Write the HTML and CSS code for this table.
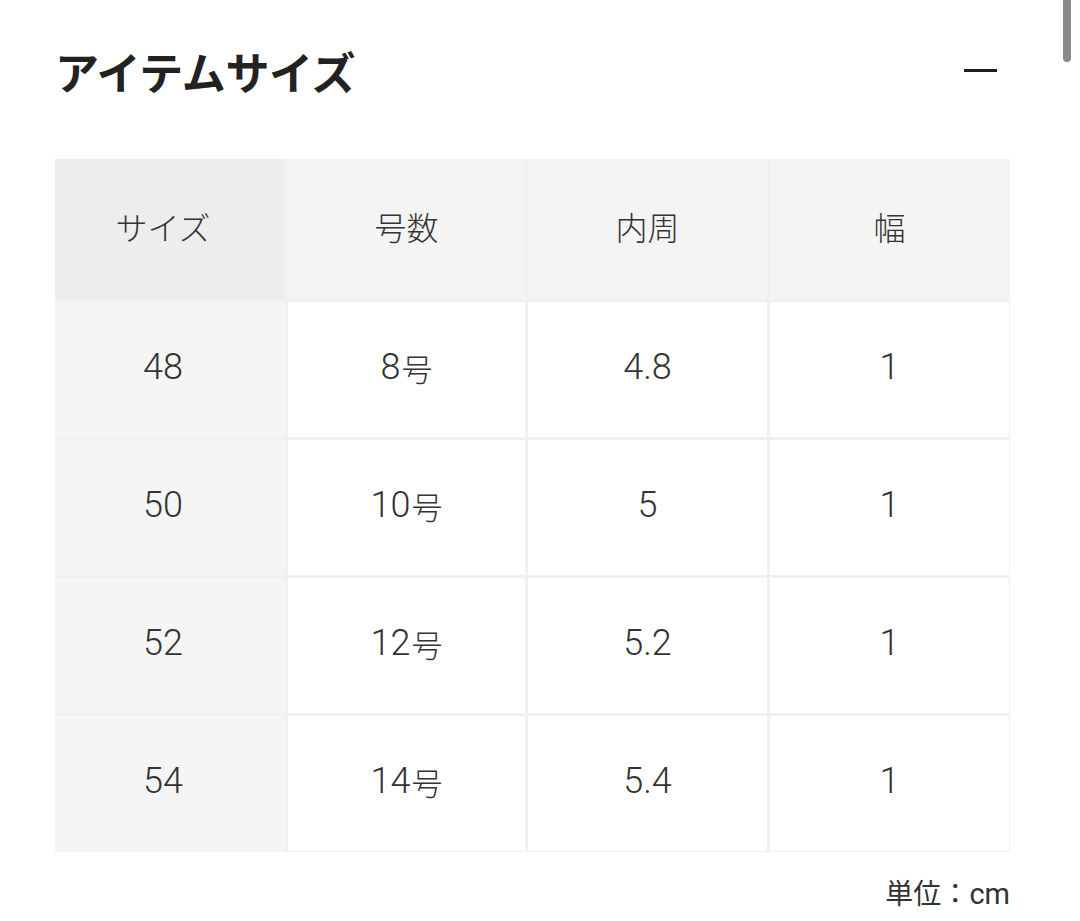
FILE: index.html
```html
<!DOCTYPE html>
<html lang="ja">
<head>
<meta charset="utf-8">
<link rel="stylesheet" href="styles.css">
</head>
<body>
<div class="scrollbar"></div>
<section class="panel">
  <div class="panel-head">
    <h2 class="title">アイテムサイズ</h2>
    <span class="minus"></span>
  </div>
  <div class="size-table">
    <div class="cell th first">サイズ</div>
    <div class="cell th">号数</div>
    <div class="cell th">内周</div>
    <div class="cell th">幅</div>

    <div class="cell first num">48</div>
    <div class="cell num">8<span class="jp">号</span></div>
    <div class="cell num">4.8</div>
    <div class="cell num">1</div>

    <div class="cell first num">50</div>
    <div class="cell num">10<span class="jp">号</span></div>
    <div class="cell num">5</div>
    <div class="cell num">1</div>

    <div class="cell first num">52</div>
    <div class="cell num">12<span class="jp">号</span></div>
    <div class="cell num">5.2</div>
    <div class="cell num">1</div>

    <div class="cell first num">54</div>
    <div class="cell num">14<span class="jp">号</span></div>
    <div class="cell num">5.4</div>
    <div class="cell num">1</div>
  </div>
  <p class="unit">単位：<span class="latin">cm</span></p>
</section>
</body>
</html>
```
FILE: styles.css
```css
html, body {
  margin: 0;
  padding: 0;
  background: #ffffff;
}
body {
  font-family: "Noto Sans CJK JP", "Noto Sans", sans-serif;
  color: #333333;
  height: 921px;
  overflow: hidden;
  position: relative;
}
.scrollbar {
  position: absolute;
  top: -6px;
  left: 1063px;
  width: 8px;
  height: 68px;
  border-radius: 4px;
  background: #8a8a8a;
}
.panel {
  padding: 41px 70px 0 55px;
}
.panel-head {
  display: flex;
  align-items: center;
  justify-content: space-between;
  height: 60px;
}
.title {
  margin: 0 0 0 0;
  font-size: 44px;
  font-weight: 700;
  line-height: 60px;
  color: #222222;
  letter-spacing: -0.3px;
}
.minus {
  display: block;
  width: 33px;
  height: 3px;
  background: #1f1f1f;
  margin-right: 13px;
  margin-top: -2px;
}
.size-table {
  margin-top: 58px;
  width: 954px;
  display: grid;
  grid-template-columns: 230px 237px 239px 239px;
  grid-template-rows: 140px repeat(4, 135px);
  gap: 3px 3px;
  background: #f0f0f0;
  border-right: 1px solid #f0f0f0;
  border-bottom: 1px solid #f2f2f2;
  box-sizing: content-box;
}
.cell {
  display: flex;
  align-items: center;
  justify-content: center;
  background: #ffffff;
  font-size: 32px;
  color: #333333;
}
.cell.th {
  background: #f4f4f4;
  font-weight: 300;
  padding-bottom: 6px;
}
.cell.th.first {
  background: #ededed;
}
.cell.first {
  background: #f5f5f5;
  padding-right: 14px;
}
.cell.num {
  font-family: Roboto, "Noto Sans CJK JP", sans-serif;
  font-weight: 300;
  font-size: 36px;
  padding-bottom: 5px;
}
.jp {
  font-family: "Noto Sans CJK JP", sans-serif;
  font-weight: 300;
  font-size: 31px;
  margin-left: 1px;
}
.unit {
  margin: 20px 0 0 0;
  width: 955px;
  text-align: right;
  font-size: 28px;
  line-height: 40px;
  color: #333333;
}
.latin {
  font-family: Roboto, sans-serif;
  font-size: 29px;
}
```
